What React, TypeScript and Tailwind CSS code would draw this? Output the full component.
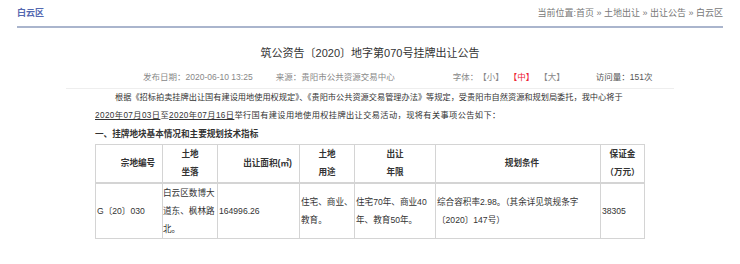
import React from 'react';

const font = { fontFamily: '"Liberation Sans", "Noto Sans CJK SC", sans-serif' };

export default function App() {
  return (
    <div className="w-[740px] h-[264px] bg-white text-[#333] overflow-hidden" style={font}>
      {/* top bar */}
      <div className="mx-[17px] flex justify-between items-end h-[28px] pb-[7px] border-b-2 border-[#aab5cd]">
        <span className="text-[9px] leading-[12px] font-bold text-[#5468b0]">白云区</span>
        <span className="text-[9px] leading-[12px] text-[#777]">当前位置:首页 » 土地出让 » 出让公告 » 白云区</span>
      </div>

      <h1 className="mt-[18px] text-center text-[11px] leading-[14px] text-[#333]">
        筑公资告〔2020〕地字第070号挂牌出让公告
      </h1>

      <div className="mt-[11px] ml-[143px] flex items-center text-[8.5px] leading-[12px] text-[#888]">
        <span>发布日期：2020-06-10 13:25</span>
        <span className="ml-[23px]">来源：贵阳市公共资源交易中心</span>
        <span className="ml-[58px] flex">
          <span>字体：</span>
          <span>【小】</span>
          <span className="ml-[5px] text-[#e23]">【中】</span>
          <span className="ml-[5px]">【大】</span>
        </span>
        <span className="ml-[31px] text-[#555]">访问量：151次</span>
      </div>

      <div className="mt-[5px] mx-[66px] border-t border-[#eee]" />

      <div className="ml-[95px] w-[560px] text-[8.6px] leading-[18px]">
        <p className="indent-[20px] whitespace-nowrap text-[8.2px]">
          根据《招标拍卖挂牌出让国有建设用地使用权规定》、《贵阳市公共资源交易管理办法》等规定，受贵阳市自然资源和规划局委托，我中心将于
        </p>
        <p className="whitespace-nowrap text-[8.2px] tracking-[0.4px]">
          <span className="underline">2020年07月03日</span>至<span className="underline">2020年07月16日</span>举行国有建设用地使用权挂牌出让交易活动，现将有关事项公告如下：
        </p>
        <p className="font-bold">一、挂牌地块基本情况和主要规划技术指标</p>

        <table className="mt-[1px] border-collapse border border-[#d4d4d4] leading-[18px]">
          <thead>
            <tr className="border-b-2 border-[#d4d4d4] h-[38px]">
              <th className="w-[67px] border border-[#d4d4d4] p-0 pl-[18px] font-bold">宗地编号</th>
              <th className="w-[55px] border border-[#d4d4d4] p-0 font-bold">土地<br />坐落</th>
              <th className="w-[82px] border border-[#d4d4d4] p-0 pl-[18px] font-bold">出让面积(㎡)</th>
              <th className="w-[55px] border border-[#d4d4d4] p-0 font-bold">土地<br />用途</th>
              <th className="w-[81px] border border-[#d4d4d4] p-0 font-bold">出让<br />年限</th>
              <th className="w-[165px] border border-[#d4d4d4] p-0 pl-[8px] font-bold">规划条件</th>
              <th className="w-[44px] border border-[#d4d4d4] p-0 font-bold">保证金<br />（万元）</th>
            </tr>
          </thead>
          <tbody>
            <tr className="h-[55px] align-middle">
              <td className="border border-[#d4d4d4] p-0 pl-[1px]">G〔20〕030</td>
              <td className="border border-[#d4d4d4] p-0">白云区数博大道东、枫林路北。</td>
              <td className="border border-[#d4d4d4] p-0 pl-[1px]">164996.26</td>
              <td className="border border-[#d4d4d4] p-0 pl-[1px]">住宅、商业、教育。</td>
              <td className="border border-[#d4d4d4] p-0 pl-[1px]">住宅70年、商业40年、教育50年。</td>
              <td className="border border-[#d4d4d4] p-0 pl-[1px]">综合容积率2.98。（其余详见筑规条字〔2020〕147号）</td>
              <td className="border border-[#d4d4d4] p-0 pl-[1px]">38305</td>
            </tr>
          </tbody>
        </table>
      </div>
    </div>
  );
}
